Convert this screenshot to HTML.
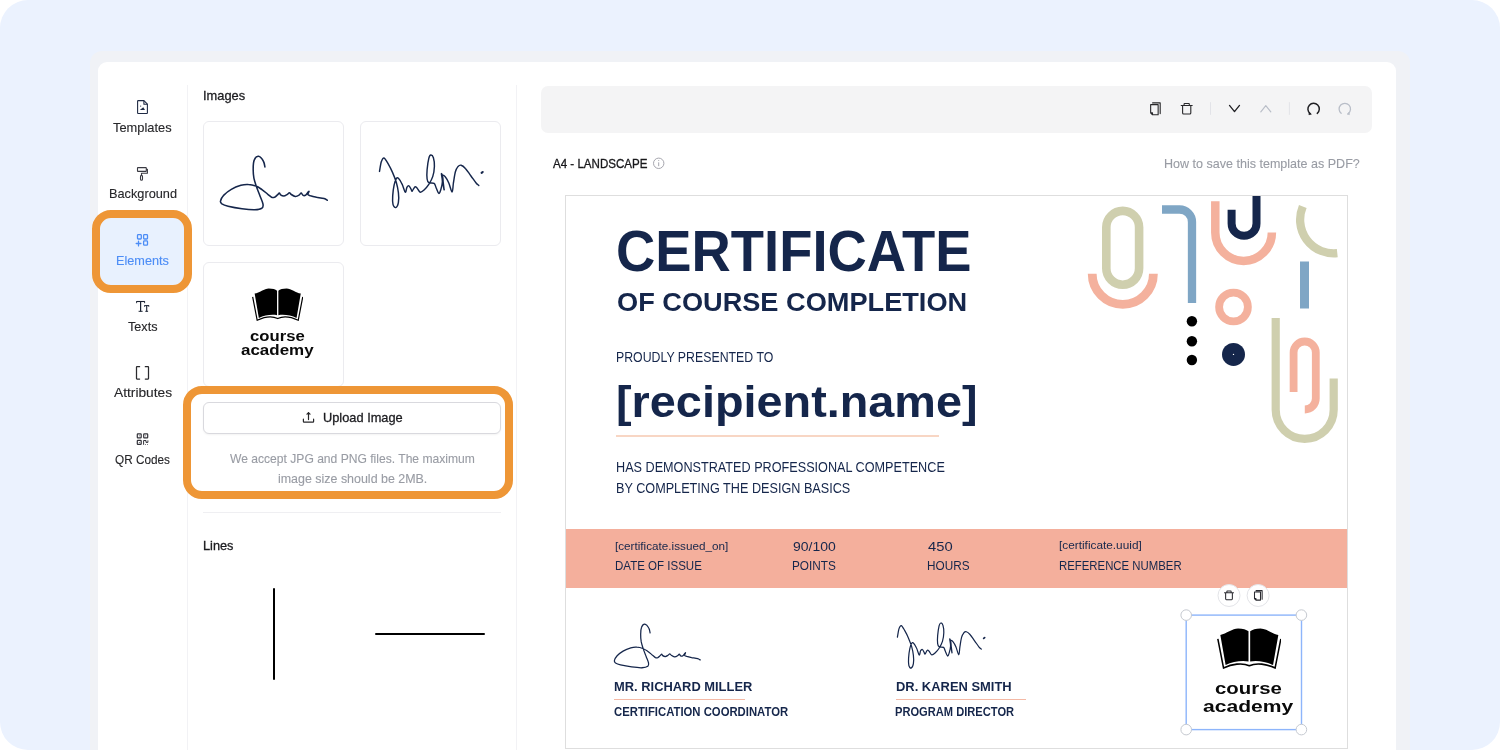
<!DOCTYPE html>
<html lang="en"><head><meta charset="utf-8"><title>Certificate builder - Elements</title>
<style>
html,body{margin:0;padding:0;background:#fff;}
body{width:1500px;height:750px;overflow:hidden;font-family:"Liberation Sans",sans-serif;}
#stage{position:relative;width:1500px;height:750px;overflow:hidden;background:#ebf2fe;border-radius:28px;}
#stage div,#stage svg{position:absolute;box-sizing:border-box;}
.t{white-space:nowrap;line-height:1;transform-origin:0 0;}
.frame{left:90px;top:51px;width:1320px;height:720px;background:#f0f2f6;border-radius:12px;}
.app{left:98px;top:62px;width:1298px;height:720px;background:#fff;border-radius:9px;}
.vdiv{width:1px;background:#f2f2f5;}
.hdiv{height:1px;background:#efeff2;}
.thumb{border:1px solid #ebebef;border-radius:6px;background:#fff;}
.hl{border:8.5px solid #ee9636;border-radius:19px;}
.navsel{left:100px;top:218px;width:84px;height:67px;background:#e8f1fe;border-radius:10px;}
.toolbar{left:541px;top:86px;width:831px;height:46.5px;background:#f4f4f5;border-radius:7px;}
.upbtn{left:203px;top:402px;width:298px;height:31.5px;border:1px solid #d9d9de;border-radius:6px;background:#fff;box-shadow:0 1px 2px rgba(0,0,0,.05);}
.cert{left:565px;top:195px;width:783px;height:554px;border:1px solid #dedede;background:#fff;}
.band{left:566px;top:529px;width:781px;height:58.7px;background:#f4af9c;}
.pl{height:1px;background:#f6c9b5;}
#txt{left:0;top:0;width:1500px;height:750px;will-change:transform;}

</style></head>
<body>
<div id="stage">
<div class="frame"></div>
<div class="app"></div>
<div class="vdiv" style="left:186.6px;top:85px;height:665px"></div>
<div class="vdiv" style="left:516.4px;top:85px;height:665px"></div>
<div class="navsel"></div>
<div class="hl" style="left:92px;top:210px;width:100px;height:83px"></div>
<div class="thumb" style="left:203px;top:121px;width:141px;height:125px"></div>
<div class="thumb" style="left:360px;top:121px;width:141px;height:125px"></div>
<div class="thumb" style="left:203px;top:262px;width:141px;height:125px"></div>
<div class="upbtn"></div>
<div class="hl" style="left:183px;top:386px;width:330px;height:113px"></div>
<div class="hdiv" style="left:203px;top:512px;width:298px"></div>
<div style="left:273px;top:587.8px;width:2px;height:92px;background:#000;border-radius:1px"></div>
<div style="left:375.2px;top:632.7px;width:110px;height:2px;background:#000;border-radius:1px"></div>
<div class="toolbar"></div>
<div class="cert"></div>
<div class="band"></div>
<div class="pl" style="left:616px;top:435px;width:323px;height:1.6px;background:#f8d6c4"></div>
<div class="pl" style="left:614px;top:699px;width:130.6px;background:#f4b9a5"></div>
<div class="pl" style="left:895.8px;top:699px;width:130.3px;background:#f4b9a5"></div>
<svg style="left:0;top:0" width="1500" height="750" viewBox="0 0 1500 750" fill="none"><path d="M1092.2 273.7A30.6 30.6 0 0 0 1153.4 273.7" stroke="#f4b19d" stroke-width="8.8"/><rect x="1106.3" y="210.9" width="32.8" height="73.8" rx="16.4" stroke="#cfcfae" stroke-width="8.6"/><path d="M1162 209.5H1179.5A12.5 12.5 0 0 1 1192 222V303" stroke="#7fa6c5" stroke-width="8.3"/><path d="M1215.3 201.2V232.6A28.3 28.3 0 0 0 1271.9 232.6" stroke="#f4b19d" stroke-width="8.5"/><path d="M1231.6 209.8V223.4A12.45 12.45 0 0 0 1256.5 223.4V196" stroke="#15264b" stroke-width="8"/><path d="M1302.8 206.5A33.7 33.7 0 0 0 1337.3 253.2" stroke="#cfcfae" stroke-width="8.3"/><rect x="1300" y="261.5" width="9" height="47" fill="#7fa6c5"/><circle cx="1233.5" cy="307" r="14.4" stroke="#f4b19d" stroke-width="7.8"/><circle cx="1191.9" cy="321.3" r="5.2" fill="#000"/><circle cx="1191.9" cy="341.2" r="5.2" fill="#000"/><circle cx="1191.9" cy="360.0" r="5.2" fill="#000"/><circle cx="1233.5" cy="354.4" r="11.5" fill="#15264b"/><circle cx="1233.5" cy="354.4" r="0.7" fill="#fff"/><path d="M1275.7 317.9V409.8A29 29 0 0 0 1333.7 409.8V378.4" stroke="#cfcfae" stroke-width="8.2"/><path d="M1293.6 392.1V352.6A11.1 11.1 0 0 1 1315.8 352.6V398.5A11 11 0 0 1 1304.8 409.5" stroke="#f4b19d" stroke-width="7.8"/></svg><svg style="left:220.0px;top:156.0px;overflow:visible" width="108.0" height="54.6"><g transform="scale(1.0000 1.0000)"><path d="M44.9 10.9C44.7 9.9 44.4 6.8 43.3 5.0C42.3 3.2 40.0 0.4 38.5 0.2C37.0 0.0 35.1 1.9 34.3 3.9C33.4 6.0 33.2 9.4 33.2 12.5C33.1 15.5 33.4 19.0 33.9 22.1C34.5 25.1 35.4 27.6 36.4 30.6C37.4 33.6 39.0 37.3 40.1 40.2C41.2 43.1 42.7 46.2 43.0 48.2C43.3 50.2 43.4 51.2 42.0 52.1C40.7 53.1 38.1 53.7 34.8 53.8C31.4 53.9 26.4 53.4 22.0 52.8C17.5 52.2 11.5 51.1 8.1 50.3C4.8 49.5 3.2 48.8 1.9 47.9C0.7 47.0 0.1 46.4 0.5 45.0C0.8 43.5 2.1 41.1 3.9 39.1C5.7 37.2 8.5 34.9 11.3 33.3C14.2 31.6 18.1 30.1 20.9 29.3C23.8 28.5 25.9 28.3 28.4 28.5C30.9 28.6 33.5 29.2 35.9 30.1C38.2 30.9 40.3 32.5 42.3 33.8C44.2 35.1 46.0 36.8 47.6 38.1C49.2 39.3 50.5 40.7 51.6 41.3C52.8 41.8 53.6 41.6 54.5 41.3C55.5 40.9 56.6 39.6 57.4 38.9C58.2 38.2 58.8 37.0 59.3 37.0C59.9 37.0 59.9 38.4 60.6 38.9C61.3 39.4 62.7 40.0 63.8 40.0C64.9 39.9 66.1 39.1 67.0 38.6C67.9 38.1 68.7 36.8 69.4 36.8C70.2 36.8 70.3 37.9 71.3 38.5C72.2 39.1 74.0 40.3 75.3 40.4C76.6 40.5 78.1 39.7 79.0 39.1C80.0 38.6 80.5 37.0 81.2 37.0C81.8 37.0 82.2 39.0 83.0 39.3C83.7 39.7 84.8 39.7 85.7 39.1C86.5 38.6 87.6 36.7 88.1 36.1C88.7 35.5 89.0 35.1 89.0 35.5C88.9 35.9 87.7 37.8 87.9 38.5C88.1 39.2 89.0 39.3 90.5 39.8C91.9 40.2 94.4 40.8 96.6 41.3C98.9 41.7 102.3 42.1 104.1 42.6C105.9 43.1 106.8 44.0 107.3 44.2" fill="none" stroke="#15264b" stroke-width="1.55" stroke-linecap="round" stroke-linejoin="round"/></g></svg><svg style="left:378.9px;top:155.3px;overflow:visible" width="105.8" height="53.1"><g transform="scale(1.0000 1.0000)"><path d="M0.5 16.4C0.8 14.8 1.6 9.0 2.3 6.8C3.1 4.6 3.8 2.7 5.0 3.0C6.2 3.3 7.8 6.5 9.2 8.9C10.6 11.3 12.2 14.4 13.5 17.4C14.8 20.4 16.2 23.6 17.2 27.0C18.2 30.4 19.0 34.3 19.4 37.7C19.8 41.1 19.9 44.8 19.4 47.3C19.0 49.8 17.6 52.2 16.7 52.6C15.8 52.9 14.5 51.3 14.0 49.4C13.5 47.4 13.5 44.1 13.7 40.9C13.9 37.7 14.5 33.0 15.1 30.2C15.7 27.3 16.5 24.9 17.2 23.8C17.9 22.6 18.4 22.4 19.4 23.3C20.4 24.2 22.0 26.9 23.1 29.2C24.3 31.5 25.5 36.7 26.3 37.2C27.1 37.7 27.3 33.5 27.9 32.4C28.5 31.3 29.3 30.4 30.0 30.8C30.7 31.1 31.7 33.6 32.2 34.5C32.7 35.4 32.6 36.5 33.2 36.1C33.8 35.6 35.1 32.3 35.9 31.8C36.7 31.3 37.1 32.0 38.0 32.9C38.9 33.8 40.0 36.9 41.2 37.2C42.4 37.5 43.9 36.0 45.3 34.7C46.7 33.4 48.4 31.6 49.8 29.4C51.2 27.2 52.9 24.4 53.8 21.4C54.7 18.4 55.3 14.5 55.4 11.4C55.5 8.3 55.0 4.6 54.4 2.7C53.8 0.8 52.6 -0.1 51.8 0.0C51.0 0.1 50.4 0.9 49.8 3.4C49.2 5.8 48.4 11.3 48.1 14.7C47.8 18.1 47.8 21.8 48.1 24.0C48.4 26.2 48.6 27.0 49.8 27.7C51.0 28.4 53.9 27.6 55.1 28.4C56.3 29.2 56.3 31.0 57.1 32.7C57.9 34.4 59.0 38.1 59.8 38.4C60.6 38.7 61.2 36.6 61.8 34.7C62.4 32.7 63.3 29.4 63.4 26.7C63.5 24.0 62.3 19.4 62.4 18.7C62.5 18.0 63.5 20.7 63.8 22.7C64.1 24.7 64.2 28.7 64.4 30.7C64.6 32.7 65.2 35.4 65.1 34.7C65.1 34.0 64.4 29.1 64.1 26.7C63.8 24.3 63.0 21.2 63.4 20.4C63.8 19.6 65.3 20.7 66.4 22.0C67.5 23.3 68.7 25.5 69.8 28.0C70.9 30.5 72.3 37.0 73.1 37.0C73.9 37.0 73.9 31.4 74.4 28.0C75.0 24.6 75.6 19.5 76.4 16.7C77.2 13.9 78.2 12.5 79.1 11.4C80.1 10.3 80.9 9.9 82.1 10.2C83.3 10.5 84.8 11.6 86.4 13.4C88.0 15.1 90.0 18.3 91.8 20.7C93.6 23.1 95.8 26.4 97.1 28.0C98.4 29.6 99.4 30.0 99.8 30.4" fill="none" stroke="#15264b" stroke-width="1.45" stroke-linecap="round" stroke-linejoin="round"/><path d="M102.6 17.9l1.1 -0.9" stroke="#15264b" stroke-width="2.1" stroke-linecap="round"/></g></svg><svg style="left:614.0px;top:623.6px;overflow:visible" width="86.8" height="44.4"><g transform="scale(0.8037 0.8132)"><path d="M44.9 10.9C44.7 9.9 44.4 6.8 43.3 5.0C42.3 3.2 40.0 0.4 38.5 0.2C37.0 0.0 35.1 1.9 34.3 3.9C33.4 6.0 33.2 9.4 33.2 12.5C33.1 15.5 33.4 19.0 33.9 22.1C34.5 25.1 35.4 27.6 36.4 30.6C37.4 33.6 39.0 37.3 40.1 40.2C41.2 43.1 42.7 46.2 43.0 48.2C43.3 50.2 43.4 51.2 42.0 52.1C40.7 53.1 38.1 53.7 34.8 53.8C31.4 53.9 26.4 53.4 22.0 52.8C17.5 52.2 11.5 51.1 8.1 50.3C4.8 49.5 3.2 48.8 1.9 47.9C0.7 47.0 0.1 46.4 0.5 45.0C0.8 43.5 2.1 41.1 3.9 39.1C5.7 37.2 8.5 34.9 11.3 33.3C14.2 31.6 18.1 30.1 20.9 29.3C23.8 28.5 25.9 28.3 28.4 28.5C30.9 28.6 33.5 29.2 35.9 30.1C38.2 30.9 40.3 32.5 42.3 33.8C44.2 35.1 46.0 36.8 47.6 38.1C49.2 39.3 50.5 40.7 51.6 41.3C52.8 41.8 53.6 41.6 54.5 41.3C55.5 40.9 56.6 39.6 57.4 38.9C58.2 38.2 58.8 37.0 59.3 37.0C59.9 37.0 59.9 38.4 60.6 38.9C61.3 39.4 62.7 40.0 63.8 40.0C64.9 39.9 66.1 39.1 67.0 38.6C67.9 38.1 68.7 36.8 69.4 36.8C70.2 36.8 70.3 37.9 71.3 38.5C72.2 39.1 74.0 40.3 75.3 40.4C76.6 40.5 78.1 39.7 79.0 39.1C80.0 38.6 80.5 37.0 81.2 37.0C81.8 37.0 82.2 39.0 83.0 39.3C83.7 39.7 84.8 39.7 85.7 39.1C86.5 38.6 87.6 36.7 88.1 36.1C88.7 35.5 89.0 35.1 89.0 35.5C88.9 35.9 87.7 37.8 87.9 38.5C88.1 39.2 89.0 39.3 90.5 39.8C91.9 40.2 94.4 40.8 96.6 41.3C98.9 41.7 102.3 42.1 104.1 42.6C105.9 43.1 106.8 44.0 107.3 44.2" fill="none" stroke="#15264b" stroke-width="1.55" stroke-linecap="round" stroke-linejoin="round"/></g></svg><svg style="left:897.3px;top:622.7px;overflow:visible" width="89.4" height="45.6"><g transform="scale(0.8450 0.8588)"><path d="M0.5 16.4C0.8 14.8 1.6 9.0 2.3 6.8C3.1 4.6 3.8 2.7 5.0 3.0C6.2 3.3 7.8 6.5 9.2 8.9C10.6 11.3 12.2 14.4 13.5 17.4C14.8 20.4 16.2 23.6 17.2 27.0C18.2 30.4 19.0 34.3 19.4 37.7C19.8 41.1 19.9 44.8 19.4 47.3C19.0 49.8 17.6 52.2 16.7 52.6C15.8 52.9 14.5 51.3 14.0 49.4C13.5 47.4 13.5 44.1 13.7 40.9C13.9 37.7 14.5 33.0 15.1 30.2C15.7 27.3 16.5 24.9 17.2 23.8C17.9 22.6 18.4 22.4 19.4 23.3C20.4 24.2 22.0 26.9 23.1 29.2C24.3 31.5 25.5 36.7 26.3 37.2C27.1 37.7 27.3 33.5 27.9 32.4C28.5 31.3 29.3 30.4 30.0 30.8C30.7 31.1 31.7 33.6 32.2 34.5C32.7 35.4 32.6 36.5 33.2 36.1C33.8 35.6 35.1 32.3 35.9 31.8C36.7 31.3 37.1 32.0 38.0 32.9C38.9 33.8 40.0 36.9 41.2 37.2C42.4 37.5 43.9 36.0 45.3 34.7C46.7 33.4 48.4 31.6 49.8 29.4C51.2 27.2 52.9 24.4 53.8 21.4C54.7 18.4 55.3 14.5 55.4 11.4C55.5 8.3 55.0 4.6 54.4 2.7C53.8 0.8 52.6 -0.1 51.8 0.0C51.0 0.1 50.4 0.9 49.8 3.4C49.2 5.8 48.4 11.3 48.1 14.7C47.8 18.1 47.8 21.8 48.1 24.0C48.4 26.2 48.6 27.0 49.8 27.7C51.0 28.4 53.9 27.6 55.1 28.4C56.3 29.2 56.3 31.0 57.1 32.7C57.9 34.4 59.0 38.1 59.8 38.4C60.6 38.7 61.2 36.6 61.8 34.7C62.4 32.7 63.3 29.4 63.4 26.7C63.5 24.0 62.3 19.4 62.4 18.7C62.5 18.0 63.5 20.7 63.8 22.7C64.1 24.7 64.2 28.7 64.4 30.7C64.6 32.7 65.2 35.4 65.1 34.7C65.1 34.0 64.4 29.1 64.1 26.7C63.8 24.3 63.0 21.2 63.4 20.4C63.8 19.6 65.3 20.7 66.4 22.0C67.5 23.3 68.7 25.5 69.8 28.0C70.9 30.5 72.3 37.0 73.1 37.0C73.9 37.0 73.9 31.4 74.4 28.0C75.0 24.6 75.6 19.5 76.4 16.7C77.2 13.9 78.2 12.5 79.1 11.4C80.1 10.3 80.9 9.9 82.1 10.2C83.3 10.5 84.8 11.6 86.4 13.4C88.0 15.1 90.0 18.3 91.8 20.7C93.6 23.1 95.8 26.4 97.1 28.0C98.4 29.6 99.4 30.0 99.8 30.4" fill="none" stroke="#15264b" stroke-width="1.45" stroke-linecap="round" stroke-linejoin="round"/><path d="M102.6 17.9l1.1 -0.9" stroke="#15264b" stroke-width="2.1" stroke-linecap="round"/></g></svg><svg style="left:0;top:0" width="1500" height="750" viewBox="0 0 1500 750" fill="none"><g stroke="#1f2a44" stroke-width="1.1" stroke-linejoin="round"><path d="M138.2 100.6H143.9L147.4 104.2V112.9A.6 .6 0 0 1 146.8 113.5H138.2A.6 .6 0 0 1 137.6 112.9V101.2A.6 .6 0 0 1 138.2 100.6Z"/><path d="M143.9 100.8V104.3H147.3"/></g><path d="M139.8 110L143.3 107.2L145 110Z" fill="#1f2a44"/><circle cx="140.7" cy="106.1" r=".55" fill="#1f2a44"/><g stroke="#3a3a42" stroke-width="1.1" stroke-linejoin="round"><rect x="137.5" y="167.6" width="8.8" height="3.8" rx=".5"/><path d="M146.3 169.4H147.4V173.3H141.5V175.4"/><rect x="140.5" y="175.4" width="2" height="4.8" rx="1"/></g><g stroke="#4c8df6" stroke-width="1.3" stroke-linejoin="round" stroke-linecap="round"><rect x="137.5" y="234.7" width="3.8" height="4.3" rx=".8"/><rect x="143.6" y="234.7" width="3.9" height="4.3" rx=".8"/><rect x="143.6" y="240.9" width="3.9" height="4.3" rx=".8"/><path d="M136.2 243.5H140.9M138.5 241.2V245.9"/></g><g stroke="#1c2333" stroke-linecap="butt"><path d="M136.4 301.5H144.8" stroke-width="1.1"/><path d="M136.6 301.2V303.2M144.6 301.2V303.2" stroke-width=".9"/><path d="M140.6 301.5V311.4" stroke-width="1.2"/><path d="M138.6 311.3H142.6" stroke-width="1"/><path d="M144.4 305.6H149" stroke-width="1"/><path d="M144.6 305.3V306.9M148.8 305.3V306.9" stroke-width=".8"/><path d="M146.7 305.6V311.4" stroke-width="1.1"/><path d="M145.3 311.3H148.1" stroke-width="1"/></g><g stroke="#2a2a2e" stroke-width="1.25" stroke-linejoin="round" stroke-linecap="round"><path d="M139.6 366.7H137A.5 .5 0 0 0 136.5 367.2V378.6A.5 .5 0 0 0 137 379.1H139.6M145.3 366.7H148A.5 .5 0 0 1 148.5 367.2V378.6A.5 .5 0 0 1 148 379.1H145.3"/></g><g stroke="#33333a" stroke-width="1.2" stroke-linejoin="round"><rect x="137.3" y="433.8" width="3.9" height="4.1" rx=".6"/><rect x="143.7" y="433.8" width="4" height="4.1" rx=".6"/><rect x="137.3" y="440.4" width="3.9" height="4" rx=".6"/></g><path d="M143.6 444.8V440.5H146V442.4H147.9V440.4" stroke="#33333a" stroke-width="1" fill="none"/><g fill="#33333a"><rect x="138.9" y="435.4" width=".8" height=".9"/><rect x="145.3" y="435.4" width=".8" height=".9"/><rect x="138.9" y="442" width=".8" height=".9"/><rect x="145.2" y="444" width=".8" height=".8"/><rect x="147.2" y="444" width=".8" height=".8"/></g><g stroke="#27272a" stroke-width="1.2" stroke-linecap="round" stroke-linejoin="round"><path d="M303.4 419.2V421.5A.6 .6 0 0 0 304 422.1H313A.6 .6 0 0 0 313.6 421.5V419.2"/><path d="M308.5 419.6V412.7M307 414.2L308.5 412.6L310 414.2"/></g><circle cx="658.7" cy="163.3" r="5.2" stroke="#a6a6ae" stroke-width="1"/><path d="M658.7 162.3V166.2" stroke="#a6a6ae" stroke-width="1"/><circle cx="658.7" cy="160.5" r=".6" fill="#a6a6ae"/><g transform="translate(1155.40 108.60) scale(1.000)" fill="none" stroke="#27272a" stroke-width="1.10" stroke-linejoin="round" stroke-linecap="round"><path d="M-4.75 -3.95H2.75V6.15H-2.9L-4.75 4.3V-3.95ZM-4.75 4.3H-2.9V6.15M-2.8 -5.7H4.8V5"/></g><g transform="translate(1186.70 108.80) scale(1.000)" fill="none" stroke="#27272a" stroke-width="1.10" stroke-linejoin="round" stroke-linecap="round"><path d="M-5.5 -3.3H5.5M-2.6 -3.3V-4.8A.5 .5 0 0 1 -2.1 -5.3H2.1A.5 .5 0 0 1 2.6 -4.8V-3.3M-4.1 -3.3V4.2A1 1 0 0 0 -3.1 5.2H3.1A1 1 0 0 0 4.1 4.2V-3.3"/></g><path d="M1210.5 102.2V114.8M1289.4 102.2V114.8" stroke="#e2e3e8" stroke-width="1"/><path d="M1229.5 105.4L1234.5 111.6L1239.5 105.4" stroke="#1f1f23" stroke-width="1.3" stroke-linecap="round" stroke-linejoin="round"/><path d="M1260.8 111.8L1265.8 105.6L1270.8 111.8" stroke="#b9bec8" stroke-width="1.2" stroke-linecap="round" stroke-linejoin="round"/><path d="M1317.26 113.37A5.70 5.70 0 1 0 1310.09 113.49" stroke="#1f1f23" stroke-width="1.5" stroke-linecap="round"/><path d="M1309.09 112.29l-.2 2.4l2.5 -.5Z" fill="#1f1f23" stroke="#1f1f23" stroke-width=".6" stroke-linejoin="round"/><path d="M1341.14 113.37A5.70 5.70 0 1 1 1348.31 113.49" stroke="#b9bec8" stroke-width="1.3" stroke-linecap="round"/><path d="M1349.31 112.29l.2 2.4l-2.5 -.5Z" fill="#b9bec8" stroke="#b9bec8" stroke-width=".5" stroke-linejoin="round"/><rect x="1186.2" y="615.1" width="115.3" height="114.5" stroke="#8db5fb" stroke-width="1.4"/><circle cx="1186.2" cy="615.1" r="5.3" fill="#fff" stroke="#c5c9d0" stroke-width="1"/><circle cx="1301.4" cy="615.1" r="5.3" fill="#fff" stroke="#c5c9d0" stroke-width="1"/><circle cx="1186.2" cy="729.6" r="5.3" fill="#fff" stroke="#c5c9d0" stroke-width="1"/><circle cx="1301.4" cy="729.6" r="5.3" fill="#fff" stroke="#c5c9d0" stroke-width="1"/><circle cx="1229.0" cy="595.5" r="11" fill="#fff" stroke="#e3e4e8" stroke-width="1"/><circle cx="1258.1" cy="595.5" r="11" fill="#fff" stroke="#e3e4e8" stroke-width="1"/><g transform="translate(1229.00 595.40) scale(0.820)" fill="none" stroke="#2a2a30" stroke-width="1.28" stroke-linejoin="round" stroke-linecap="round"><path d="M-5.5 -3.3H5.5M-2.6 -3.3V-4.8A.5 .5 0 0 1 -2.1 -5.3H2.1A.5 .5 0 0 1 2.6 -4.8V-3.3M-4.1 -3.3V4.2A1 1 0 0 0 -3.1 5.2H3.1A1 1 0 0 0 4.1 4.2V-3.3"/></g><g transform="translate(1258.30 595.20) scale(0.800)" fill="none" stroke="#2a2a30" stroke-width="1.31" stroke-linejoin="round" stroke-linecap="round"><path d="M-4.75 -3.95H2.75V6.15H-2.9L-4.75 4.3V-3.95ZM-4.75 4.3H-2.9V6.15M-2.8 -5.7H4.8V5"/></g></svg><svg style="left:1216.5px;top:628.0px" width="64.4" height="41.2" viewBox="148 58 464 297" preserveAspectRatio="none"><path d="M154 137L195 346C255 318 330 306 381 330C432 306 507 318 567 346L608 137" fill="none" stroke="#000" stroke-width="11"/><path d="M172 108C215 100 260 62 300 62C335 62 360 70 375 82L375 300C330 290 260 300 210 325Z" fill="#000"/><path d="M590 108C547 100 502 62 462 62C427 62 402 70 387 82L387 300C432 290 502 300 552 325Z" fill="#000"/></svg><svg style="left:252.0px;top:287.9px" width="51.2" height="33.3" viewBox="148 58 464 297" preserveAspectRatio="none"><path d="M154 137L195 346C255 318 330 306 381 330C432 306 507 318 567 346L608 137" fill="none" stroke="#000" stroke-width="11"/><path d="M172 108C215 100 260 62 300 62C335 62 360 70 375 82L375 300C330 290 260 300 210 325Z" fill="#000"/><path d="M590 108C547 100 502 62 462 62C427 62 402 70 387 82L387 300C432 290 502 300 552 325Z" fill="#000"/></svg>
<div id="txt">
<div class="t" style="left:113.20px;top:120.80px;font-size:13px;color:#27272a;transform:scaleX(0.9889);-webkit-text-stroke:0.12px currentColor;">Templates</div>
<div class="t" style="left:108.82px;top:187.10px;font-size:13px;color:#27272a;transform:scaleX(0.9800);-webkit-text-stroke:0.12px currentColor;">Background</div>
<div class="t" style="left:116.12px;top:253.60px;font-size:13px;color:#4c8df6;transform:scaleX(0.9775);-webkit-text-stroke:0.12px currentColor;">Elements</div>
<div class="t" style="left:127.81px;top:319.90px;font-size:13px;color:#27272a;transform:scaleX(0.9717);-webkit-text-stroke:0.12px currentColor;">Texts</div>
<div class="t" style="left:113.60px;top:386.20px;font-size:13px;color:#27272a;transform:scaleX(1.0585);-webkit-text-stroke:0.12px currentColor;">Attributes</div>
<div class="t" style="left:115.16px;top:452.70px;font-size:13px;color:#27272a;transform:scaleX(0.9047);-webkit-text-stroke:0.12px currentColor;">QR Codes</div>
<div class="t" style="left:202.62px;top:88.60px;font-size:13px;color:#1b1b1f;transform:scaleX(0.9871);-webkit-text-stroke:0.3px currentColor;">Images</div>
<div class="t" style="left:322.52px;top:411.40px;font-size:13px;color:#1b1b1f;transform:scaleX(0.9848);-webkit-text-stroke:0.3px currentColor;">Upload Image</div>
<div class="t" style="left:229.80px;top:452.20px;font-size:13px;color:#999ca4;transform:scaleX(0.9302);-webkit-text-stroke:0.12px currentColor;">We accept JPG and PNG files. The maximum</div>
<div class="t" style="left:277.83px;top:471.50px;font-size:13px;color:#999ca4;transform:scaleX(0.9567);-webkit-text-stroke:0.12px currentColor;">image size should be 2MB.</div>
<div class="t" style="left:202.82px;top:539.00px;font-size:13px;color:#1b1b1f;transform:scaleX(0.9805);-webkit-text-stroke:0.3px currentColor;">Lines</div>
<div class="t" style="left:552.70px;top:157.70px;font-size:12px;color:#18181b;transform:scaleX(0.9638);-webkit-text-stroke:0.3px currentColor;">A4 - LANDSCAPE</div>
<div class="t" style="left:1163.64px;top:157.00px;font-size:13px;color:#999ca4;transform:scaleX(0.9643);-webkit-text-stroke:0.12px currentColor;">How to save this template as PDF?</div>
<div class="t" style="left:616.30px;top:222.80px;font-size:57.1px;color:#15264b;transform:scaleX(0.9526);font-weight:700;">CERTIFICATE</div>
<div class="t" style="left:617.15px;top:289.30px;font-size:26.5px;color:#15264b;transform:scaleX(1.0251);font-weight:700;">OF COURSE COMPLETION</div>
<div class="t" style="left:615.72px;top:350.70px;font-size:13.9px;color:#15264b;transform:scaleX(0.8871);">PROUDLY PRESENTED TO</div>
<div class="t" style="left:615.81px;top:378.90px;font-size:45px;color:#15264b;transform:scaleX(1.0404);font-weight:700;">[recipient.name]</div>
<div class="t" style="left:615.71px;top:460.30px;font-size:14.1px;color:#15264b;transform:scaleX(0.8972);">HAS DEMONSTRATED PROFESSIONAL COMPETENCE</div>
<div class="t" style="left:615.71px;top:480.80px;font-size:14.1px;color:#15264b;transform:scaleX(0.8974);">BY COMPLETING THE DESIGN BASICS</div>
<div class="t" style="left:615.06px;top:541.40px;font-size:11.1px;color:#15264b;transform:scaleX(1.0550);">[certificate.issued_on]</div>
<div class="t" style="left:614.89px;top:560.00px;font-size:12.6px;color:#15264b;transform:scaleX(0.9147);">DATE OF ISSUE</div>
<div class="t" style="left:792.75px;top:541.10px;font-size:12.6px;color:#15264b;transform:scaleX(1.1081);">90/100</div>
<div class="t" style="left:792.36px;top:560.00px;font-size:12.6px;color:#15264b;transform:scaleX(0.9361);">POINTS</div>
<div class="t" style="left:928.17px;top:541.00px;font-size:12.6px;color:#15264b;transform:scaleX(1.1707);">450</div>
<div class="t" style="left:927.47px;top:560.00px;font-size:12.6px;color:#15264b;transform:scaleX(0.9341);">HOURS</div>
<div class="t" style="left:1058.95px;top:540.20px;font-size:11.1px;color:#15264b;transform:scaleX(1.0649);">[certificate.uuid]</div>
<div class="t" style="left:1058.80px;top:560.10px;font-size:12.6px;color:#15264b;transform:scaleX(0.9031);">REFERENCE NUMBER</div>
<div class="t" style="left:613.84px;top:679.50px;font-size:13.5px;color:#15264b;transform:scaleX(0.9555);font-weight:700;">MR. RICHARD MILLER</div>
<div class="t" style="left:613.93px;top:706.00px;font-size:12.1px;color:#15264b;transform:scaleX(0.9356);font-weight:700;">CERTIFICATION COORDINATOR</div>
<div class="t" style="left:895.64px;top:679.50px;font-size:13.5px;color:#15264b;transform:scaleX(0.9580);font-weight:700;">DR. KAREN SMITH</div>
<div class="t" style="left:895.36px;top:706.00px;font-size:12.1px;color:#15264b;transform:scaleX(0.9200);font-weight:700;">PROGRAM DIRECTOR</div>
<div class="t" style="left:1214.70px;top:680.20px;font-size:17.4px;color:#0a0a0a;transform:scaleX(1.1721);font-weight:700;">course</div>
<div class="t" style="left:1202.99px;top:698.10px;font-size:17.4px;color:#0a0a0a;transform:scaleX(1.2110);font-weight:700;">academy</div>
<div class="t" style="left:249.91px;top:329.40px;font-size:14.2px;color:#0a0a0a;transform:scaleX(1.1759);font-weight:700;">course</div>
<div class="t" style="left:240.82px;top:343.00px;font-size:14.2px;color:#0a0a0a;transform:scaleX(1.1956);font-weight:700;">academy</div>
</div>
</div>
</body></html>
